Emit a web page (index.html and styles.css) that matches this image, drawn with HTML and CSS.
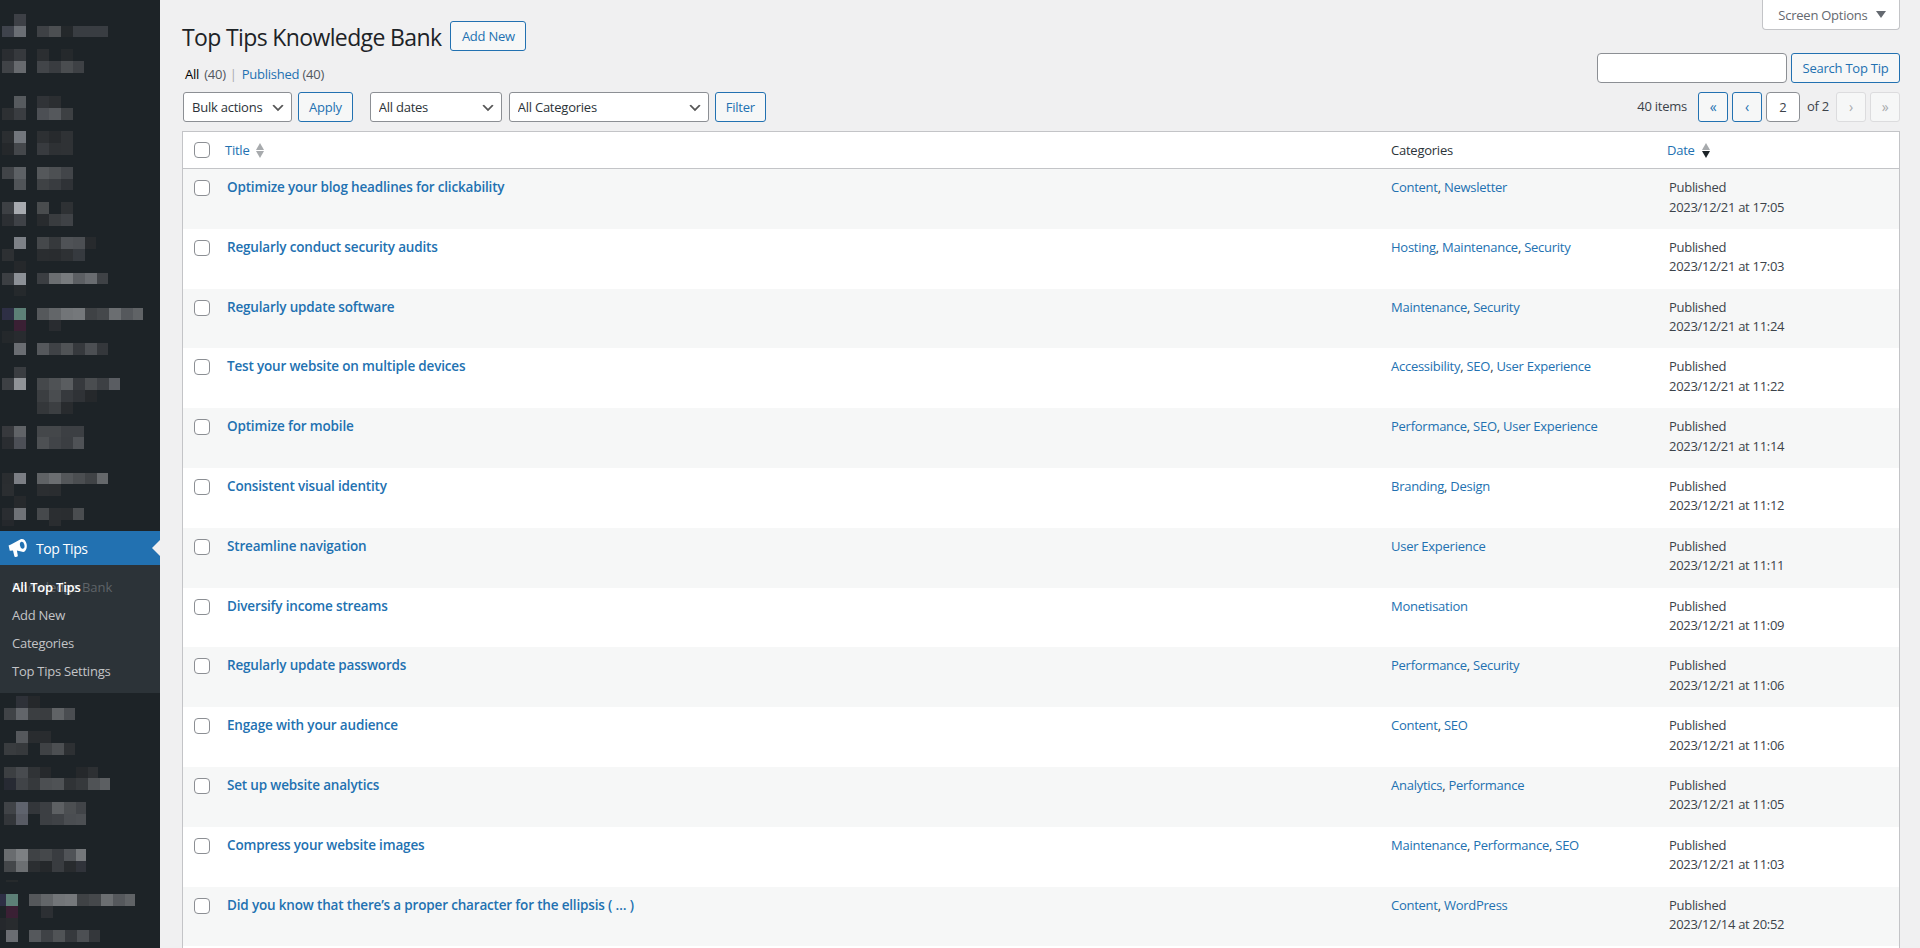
FILE: index.html
```html
<!DOCTYPE html>
<html lang="en">
<head>
<meta charset="utf-8">
<title>Top Tips Knowledge Bank</title>
<link rel="stylesheet" href="styles.css">
</head>
<body>
<div class="shell">
<aside class="sidebar">
<svg class="mosaic" width="160" height="531" viewBox="0 0 160 531" aria-hidden="true">
<rect x="14" y="14" width="12" height="12" fill="#3d4046"/>
<rect x="2" y="26" width="12" height="11" fill="#3f434c"/><rect x="14" y="26" width="12" height="11" fill="#6a6e74"/><rect x="37" y="26" width="12" height="11" fill="#3e4145"/><rect x="49" y="26" width="12" height="11" fill="#4c4f52"/><rect x="61" y="26" width="12" height="11" fill="#24282b"/><rect x="73" y="26" width="35" height="11" fill="#393d42"/>
<rect x="2" y="49" width="12" height="12" fill="#2a2d31"/><rect x="14" y="49" width="12" height="12" fill="#36393d"/><rect x="37" y="49" width="12" height="12" fill="#2b2e31"/><rect x="61" y="49" width="12" height="12" fill="#25292c"/>
<rect x="2" y="61" width="12" height="12" fill="#404347"/><rect x="14" y="61" width="12" height="12" fill="#676a6e"/><rect x="37" y="61" width="12" height="12" fill="#424549"/><rect x="49" y="61" width="12" height="12" fill="#393c40"/><rect x="61" y="61" width="12" height="12" fill="#4a4d50"/><rect x="73" y="61" width="11" height="12" fill="#3e4145"/>
<rect x="14" y="96" width="12" height="12" fill="#565a5e"/><rect x="37" y="96" width="12" height="12" fill="#303337"/><rect x="49" y="96" width="12" height="12" fill="#2b2e31"/>
<rect x="2" y="108" width="12" height="12" fill="#2d3033"/><rect x="14" y="108" width="12" height="12" fill="#3a3d41"/><rect x="37" y="108" width="12" height="12" fill="#4c4f54"/><rect x="49" y="108" width="12" height="12" fill="#55585c"/><rect x="61" y="108" width="12" height="12" fill="#3d4043"/>
<rect x="2" y="131" width="12" height="12" fill="#2b2e31"/><rect x="14" y="131" width="12" height="12" fill="#72767c"/><rect x="37" y="131" width="12" height="12" fill="#2d3033"/><rect x="49" y="131" width="12" height="12" fill="#272a2d"/><rect x="61" y="131" width="12" height="12" fill="#2f3235"/>
<rect x="2" y="143" width="12" height="12" fill="#25282b"/><rect x="14" y="143" width="12" height="12" fill="#44474b"/><rect x="37" y="143" width="12" height="12" fill="#383b3f"/><rect x="49" y="143" width="12" height="12" fill="#2e3134"/><rect x="61" y="143" width="12" height="12" fill="#2f3235"/>
<rect x="2" y="167" width="12" height="12" fill="#414448"/><rect x="14" y="167" width="12" height="12" fill="#5d6165"/><rect x="37" y="167" width="12" height="12" fill="#55585b"/><rect x="49" y="167" width="12" height="12" fill="#4d5053"/><rect x="61" y="167" width="12" height="12" fill="#424549"/>
<rect x="14" y="179" width="12" height="11" fill="#505458"/><rect x="37" y="179" width="12" height="11" fill="#3f4245"/><rect x="49" y="179" width="12" height="11" fill="#393c40"/><rect x="61" y="179" width="12" height="11" fill="#2f3236"/>
<rect x="2" y="202" width="12" height="12" fill="#3d4044"/><rect x="14" y="202" width="12" height="12" fill="#a7aaaf"/><rect x="37" y="202" width="12" height="12" fill="#494c4e"/><rect x="61" y="202" width="12" height="12" fill="#2e3134"/>
<rect x="2" y="214" width="12" height="12" fill="#2c2f33"/><rect x="14" y="214" width="12" height="12" fill="#3f4247"/><rect x="37" y="214" width="12" height="12" fill="#282b2e"/><rect x="49" y="214" width="12" height="12" fill="#393c3f"/><rect x="61" y="214" width="12" height="12" fill="#3f4246"/>
<rect x="14" y="237" width="12" height="12" fill="#7d8187"/><rect x="37" y="237" width="12" height="12" fill="#45484b"/><rect x="49" y="237" width="12" height="12" fill="#36393c"/><rect x="61" y="237" width="12" height="12" fill="#4f5256"/><rect x="73" y="237" width="12" height="12" fill="#4c4f53"/><rect x="85" y="237" width="11" height="12" fill="#272a2d"/>
<rect x="2" y="249" width="12" height="12" fill="#2d3033"/><rect x="37" y="249" width="12" height="12" fill="#2a2d30"/><rect x="49" y="249" width="12" height="12" fill="#292c2f"/><rect x="61" y="249" width="12" height="12" fill="#2e3134"/><rect x="73" y="249" width="12" height="12" fill="#363a3f"/>
<rect x="14" y="261" width="12" height="12" fill="#25282b"/>
<rect x="2" y="273" width="12" height="12" fill="#3c3f43"/><rect x="14" y="273" width="12" height="12" fill="#8c9096"/><rect x="37" y="273" width="12" height="11" fill="#3b3e42"/><rect x="49" y="273" width="12" height="11" fill="#6b6e71"/><rect x="61" y="273" width="12" height="11" fill="#787b7e"/><rect x="73" y="273" width="12" height="11" fill="#5c5f63"/><rect x="85" y="273" width="12" height="11" fill="#696c70"/><rect x="97" y="273" width="11" height="11" fill="#3f4246"/>
<rect x="14" y="285" width="12" height="11" fill="#25292c"/>
<rect x="2" y="308" width="12" height="12" fill="#2e2f45"/><rect x="14" y="308" width="12" height="12" fill="#5d8077"/><rect x="37" y="308" width="12" height="12" fill="#55585b"/><rect x="49" y="308" width="12" height="12" fill="#636669"/><rect x="61" y="308" width="12" height="12" fill="#727578"/><rect x="73" y="308" width="12" height="12" fill="#75787b"/><rect x="85" y="308" width="12" height="12" fill="#3f4245"/><rect x="97" y="308" width="12" height="12" fill="#45484b"/><rect x="109" y="308" width="12" height="12" fill="#6b6e71"/><rect x="121" y="308" width="12" height="12" fill="#55585c"/><rect x="133" y="308" width="10" height="12" fill="#606366"/>
<rect x="14" y="320" width="12" height="11" fill="#3a2034"/><rect x="49" y="320" width="12" height="11" fill="#292c30"/>
<rect x="2" y="331" width="12" height="12" fill="#24282b"/><rect x="14" y="331" width="12" height="12" fill="#282b2f"/>
<rect x="14" y="343" width="12" height="12" fill="#6a6d72"/><rect x="37" y="343" width="12" height="12" fill="#55585c"/><rect x="49" y="343" width="12" height="12" fill="#3f4246"/><rect x="61" y="343" width="12" height="12" fill="#505356"/><rect x="73" y="343" width="12" height="12" fill="#36393d"/><rect x="85" y="343" width="12" height="12" fill="#4c4f53"/><rect x="97" y="343" width="11" height="12" fill="#34373b"/>
<rect x="14" y="367" width="12" height="11" fill="#3a3d41"/>
<rect x="2" y="378" width="12" height="12" fill="#3d4044"/><rect x="14" y="378" width="12" height="12" fill="#909397"/><rect x="37" y="378" width="12" height="12" fill="#45484b"/><rect x="49" y="378" width="12" height="12" fill="#4f5255"/><rect x="61" y="378" width="12" height="12" fill="#5a5d60"/><rect x="73" y="378" width="12" height="12" fill="#36393d"/><rect x="85" y="378" width="12" height="12" fill="#4a4d50"/><rect x="97" y="378" width="12" height="12" fill="#3d4044"/><rect x="109" y="378" width="11" height="12" fill="#5a5d62"/>
<rect x="37" y="390" width="12" height="12" fill="#3b3e41"/><rect x="49" y="390" width="12" height="12" fill="#4a4d50"/><rect x="61" y="390" width="12" height="12" fill="#36393d"/><rect x="73" y="390" width="12" height="12" fill="#2f3236"/><rect x="85" y="390" width="12" height="12" fill="#25282b"/>
<rect x="37" y="402" width="12" height="12" fill="#34373a"/><rect x="49" y="402" width="12" height="12" fill="#3c3f42"/><rect x="61" y="402" width="12" height="12" fill="#282b2e"/>
<rect x="2" y="426" width="12" height="11" fill="#37393d"/><rect x="14" y="426" width="12" height="11" fill="#606367"/><rect x="37" y="426" width="12" height="11" fill="#44474a"/><rect x="49" y="426" width="12" height="11" fill="#44474a"/><rect x="61" y="426" width="12" height="11" fill="#3c3f43"/><rect x="73" y="426" width="11" height="11" fill="#3c3f43"/>
<rect x="2" y="437" width="12" height="12" fill="#2a2d31"/><rect x="14" y="437" width="12" height="12" fill="#4c4f56"/><rect x="37" y="437" width="12" height="12" fill="#4d5053"/><rect x="49" y="437" width="12" height="12" fill="#414448"/><rect x="61" y="437" width="12" height="12" fill="#3b3e42"/><rect x="73" y="437" width="11" height="12" fill="#4f5256"/>
<rect x="2" y="473" width="12" height="11" fill="#2a2d30"/><rect x="14" y="473" width="12" height="11" fill="#7b7e84"/><rect x="37" y="473" width="12" height="11" fill="#5f6265"/><rect x="49" y="473" width="12" height="11" fill="#6b6e71"/><rect x="61" y="473" width="12" height="11" fill="#54575a"/><rect x="73" y="473" width="12" height="11" fill="#4b4e51"/><rect x="85" y="473" width="12" height="11" fill="#404346"/><rect x="97" y="473" width="11" height="11" fill="#65686b"/>
<rect x="2" y="484" width="12" height="12" fill="#2b2e31"/><rect x="37" y="484" width="12" height="12" fill="#2b2e31"/><rect x="49" y="484" width="12" height="12" fill="#2a2d30"/>
<rect x="14" y="496" width="12" height="12" fill="#26292c"/>
<rect x="2" y="508" width="12" height="12" fill="#2a2d31"/><rect x="14" y="508" width="12" height="12" fill="#6f7277"/><rect x="37" y="508" width="12" height="12" fill="#46494c"/><rect x="49" y="508" width="12" height="12" fill="#2b2e31"/><rect x="61" y="508" width="12" height="12" fill="#2a2d30"/><rect x="73" y="508" width="11" height="12" fill="#4a4d50"/>
<rect x="2" y="520" width="12" height="6" fill="#25282c"/><rect x="49" y="520" width="12" height="6" fill="#2a2d30"/>
</svg>
<a class="menu-current" href="#">
<svg class="menu-icon" width="20" height="20" viewBox="0 0 20 20" aria-hidden="true"><path fill="#fff" d="M0.6 7.4 3 6.6 12.6 1.2C15 0.2 17.8 2.2 18.6 6 19.4 10 17.8 13.6 15.2 14L8.9 12.6 9.8 17.6C9.9 18.2 9.6 18.6 9 18.7L7.4 18.9C6.8 19 6.5 18.6 6.3 18L5 12.4 1.8 12.8Z"/><ellipse cx="14.2" cy="7.3" rx="2.2" ry="3.6" fill="#2271b1" transform="rotate(-12 14.2 7.3)"/></svg>
<span class="menu-label">Top Tips</span>
<span class="menu-arrow"></span>
</a>
<nav class="submenu">
<a class="sub-item sub-current" href="#"><span class="ghost">Knowledge Bank</span><span class="sub-top">All Top Tips</span></a>
<a class="sub-item" href="#">Add New</a>
<a class="sub-item" href="#">Categories</a>
<a class="sub-item" href="#">Top Tips Settings</a>
</nav>
<svg class="mosaic" width="160" height="255" viewBox="0 693 160 255" aria-hidden="true">
<rect x="16" y="696" width="12" height="12" fill="#2e3138"/><rect x="28" y="696" width="12" height="12" fill="#25282b"/>
<rect x="4" y="708" width="12" height="12" fill="#404347"/><rect x="16" y="708" width="12" height="12" fill="#62656a"/><rect x="28" y="708" width="12" height="12" fill="#3b3e41"/><rect x="40" y="708" width="12" height="12" fill="#3a3d40"/><rect x="52" y="708" width="12" height="12" fill="#606366"/><rect x="64" y="708" width="11" height="12" fill="#4a4d51"/>
<rect x="16" y="731" width="12" height="12" fill="#55585c"/><rect x="28" y="731" width="12" height="12" fill="#292c2f"/><rect x="40" y="731" width="11" height="12" fill="#292c2f"/>
<rect x="4" y="743" width="12" height="12" fill="#393c3f"/><rect x="16" y="743" width="12" height="12" fill="#36393c"/><rect x="40" y="743" width="12" height="12" fill="#3f4245"/><rect x="52" y="743" width="12" height="12" fill="#4c4f52"/><rect x="64" y="743" width="11" height="12" fill="#2d3033"/>
<rect x="4" y="767" width="12" height="11" fill="#3c3f42"/><rect x="16" y="767" width="12" height="11" fill="#484b4f"/><rect x="28" y="767" width="12" height="11" fill="#303336"/><rect x="40" y="767" width="11" height="11" fill="#26292c"/><rect x="76" y="767" width="12" height="11" fill="#25282b"/><rect x="88" y="767" width="10" height="11" fill="#2d3033"/>
<rect x="4" y="778" width="12" height="12" fill="#272a33"/><rect x="16" y="778" width="12" height="12" fill="#404347"/><rect x="28" y="778" width="12" height="12" fill="#36393c"/><rect x="40" y="778" width="12" height="12" fill="#4c4f52"/><rect x="52" y="778" width="12" height="12" fill="#4f5255"/><rect x="64" y="778" width="12" height="12" fill="#303336"/><rect x="76" y="778" width="12" height="12" fill="#36393c"/><rect x="88" y="778" width="12" height="12" fill="#505356"/><rect x="100" y="778" width="10" height="12" fill="#5c5f62"/>
<rect x="4" y="802" width="12" height="12" fill="#404347"/><rect x="16" y="802" width="12" height="12" fill="#5f636d"/><rect x="28" y="802" width="12" height="12" fill="#33363a"/><rect x="40" y="802" width="12" height="12" fill="#3c3f43"/><rect x="52" y="802" width="12" height="12" fill="#5d6063"/><rect x="64" y="802" width="12" height="12" fill="#4c4f52"/><rect x="76" y="802" width="10" height="12" fill="#414448"/>
<rect x="4" y="814" width="12" height="11" fill="#33363a"/><rect x="16" y="814" width="12" height="11" fill="#585b64"/><rect x="40" y="814" width="12" height="11" fill="#3c3f43"/><rect x="52" y="814" width="12" height="11" fill="#3f4246"/><rect x="64" y="814" width="12" height="11" fill="#4a4d51"/><rect x="76" y="814" width="10" height="11" fill="#4c4f53"/>
<rect x="4" y="849" width="12" height="12" fill="#696c6f"/><rect x="16" y="849" width="12" height="12" fill="#7d8083"/><rect x="28" y="849" width="12" height="12" fill="#3f4245"/><rect x="40" y="849" width="12" height="12" fill="#45484b"/><rect x="52" y="849" width="12" height="12" fill="#393c40"/><rect x="64" y="849" width="12" height="12" fill="#505357"/><rect x="76" y="849" width="10" height="12" fill="#74777a"/>
<rect x="4" y="861" width="12" height="11" fill="#44474a"/><rect x="16" y="861" width="12" height="11" fill="#6c6f72"/><rect x="28" y="861" width="12" height="11" fill="#2b2e31"/><rect x="40" y="861" width="12" height="11" fill="#25282b"/><rect x="52" y="861" width="12" height="11" fill="#393c40"/><rect x="64" y="861" width="12" height="11" fill="#282b2e"/><rect x="76" y="861" width="10" height="11" fill="#30333a"/>
<rect x="6" y="880" width="12" height="2" fill="#262a2c"/>
<rect x="0" y="894" width="6" height="12" fill="#2e2f45"/><rect x="6" y="894" width="12" height="12" fill="#5d8077"/><rect x="29" y="894" width="12" height="12" fill="#55585b"/><rect x="41" y="894" width="12" height="12" fill="#636669"/><rect x="53" y="894" width="12" height="12" fill="#727578"/><rect x="65" y="894" width="12" height="12" fill="#75787b"/><rect x="77" y="894" width="12" height="12" fill="#3f4245"/><rect x="89" y="894" width="12" height="12" fill="#45484b"/><rect x="101" y="894" width="12" height="12" fill="#6b6e71"/><rect x="113" y="894" width="12" height="12" fill="#55585c"/><rect x="125" y="894" width="10" height="12" fill="#606366"/>
<rect x="6" y="906" width="12" height="12" fill="#3a2034"/><rect x="41" y="906" width="12" height="12" fill="#2c2f33"/>
<rect x="0" y="918" width="6" height="12" fill="#25282c"/><rect x="6" y="918" width="12" height="12" fill="#282b2e"/>
<rect x="6" y="930" width="12" height="12" fill="#6a6d72"/><rect x="29" y="930" width="12" height="12" fill="#55585c"/><rect x="41" y="930" width="12" height="12" fill="#3f4246"/><rect x="53" y="930" width="12" height="12" fill="#505356"/><rect x="65" y="930" width="12" height="12" fill="#36393d"/><rect x="77" y="930" width="12" height="12" fill="#4c4f53"/><rect x="89" y="930" width="11" height="12" fill="#34373b"/>
</svg>
</aside>
<main class="content">
<div class="top-row">
<div class="heading"><h1 class="title">Top Tips Knowledge Bank</h1><a class="btn btn-add" href="#">Add New</a></div>
<button class="screen-options" type="button">Screen Options <span class="so-caret"></span></button>
</div>
<div class="sub-row">
<ul class="views"><li><b class="view-current">All</b> <span class="count">(40)</span></li><li class="sep">|</li><li><a href="#">Published</a> <span class="count">(40)</span></li></ul>
<div class="search"><input class="search-input" type="text" aria-label="Search"><button class="btn btn-search" type="button">Search Top Tip</button></div>
</div>
<div class="tablenav">
<div class="actions">
<select class="sel sel-bulk"><option>Bulk actions</option></select><button class="btn" type="button">Apply</button>
</div>
<div class="actions actions-filter">
<select class="sel sel-dates"><option>All dates</option></select><select class="sel sel-cats"><option>All Categories</option></select><button class="btn btn-filter" type="button">Filter</button>
</div>
<div class="pager">
<span class="items">40 items</span>
<a class="pg" href="#">«</a><a class="pg" href="#">‹</a>
<input class="pg-input" type="text" value="2" aria-label="Current page"><span class="of">of 2</span>
<span class="pg pg-off">›</span><span class="pg pg-off">»</span>
</div>
</div>
<table class="list">
<colgroup><col class="c-check"><col class="c-title"><col class="c-cats"><col class="c-date"></colgroup>
<thead><tr>
<th class="check"><input type="checkbox" class="cb" aria-label="Select all"></th>
<th class="th-sort"><a href="#">Title</a><span class="sort"><i class="up"></i><i class="down"></i></span></th>
<th>Categories</th>
<th class="th-sort th-date"><a href="#">Date</a><span class="sort sort-desc"><i class="up"></i><i class="down"></i></span></th>
</tr></thead>
<tbody>
<tr><td class="check"><input type="checkbox" class="cb" aria-label="Select"></td><td class="t"><a href="#">Optimize your blog headlines for clickability</a></td><td><a href="#">Content</a>, <a href="#">Newsletter</a></td><td class="d">Published<br>2023/12/21 at 17:05</td></tr>
<tr><td class="check"><input type="checkbox" class="cb" aria-label="Select"></td><td class="t"><a href="#">Regularly conduct security audits</a></td><td><a href="#">Hosting</a>, <a href="#">Maintenance</a>, <a href="#">Security</a></td><td class="d">Published<br>2023/12/21 at 17:03</td></tr>
<tr><td class="check"><input type="checkbox" class="cb" aria-label="Select"></td><td class="t"><a href="#">Regularly update software</a></td><td><a href="#">Maintenance</a>, <a href="#">Security</a></td><td class="d">Published<br>2023/12/21 at 11:24</td></tr>
<tr><td class="check"><input type="checkbox" class="cb" aria-label="Select"></td><td class="t"><a href="#">Test your website on multiple devices</a></td><td><a href="#">Accessibility</a>, <a href="#">SEO</a>, <a href="#">User Experience</a></td><td class="d">Published<br>2023/12/21 at 11:22</td></tr>
<tr><td class="check"><input type="checkbox" class="cb" aria-label="Select"></td><td class="t"><a href="#">Optimize for mobile</a></td><td><a href="#">Performance</a>, <a href="#">SEO</a>, <a href="#">User Experience</a></td><td class="d">Published<br>2023/12/21 at 11:14</td></tr>
<tr><td class="check"><input type="checkbox" class="cb" aria-label="Select"></td><td class="t"><a href="#">Consistent visual identity</a></td><td><a href="#">Branding</a>, <a href="#">Design</a></td><td class="d">Published<br>2023/12/21 at 11:12</td></tr>
<tr><td class="check"><input type="checkbox" class="cb" aria-label="Select"></td><td class="t"><a href="#">Streamline navigation</a></td><td><a href="#">User Experience</a></td><td class="d">Published<br>2023/12/21 at 11:11</td></tr>
<tr><td class="check"><input type="checkbox" class="cb" aria-label="Select"></td><td class="t"><a href="#">Diversify income streams</a></td><td><a href="#">Monetisation</a></td><td class="d">Published<br>2023/12/21 at 11:09</td></tr>
<tr><td class="check"><input type="checkbox" class="cb" aria-label="Select"></td><td class="t"><a href="#">Regularly update passwords</a></td><td><a href="#">Performance</a>, <a href="#">Security</a></td><td class="d">Published<br>2023/12/21 at 11:06</td></tr>
<tr><td class="check"><input type="checkbox" class="cb" aria-label="Select"></td><td class="t"><a href="#">Engage with your audience</a></td><td><a href="#">Content</a>, <a href="#">SEO</a></td><td class="d">Published<br>2023/12/21 at 11:06</td></tr>
<tr><td class="check"><input type="checkbox" class="cb" aria-label="Select"></td><td class="t"><a href="#">Set up website analytics</a></td><td><a href="#">Analytics</a>, <a href="#">Performance</a></td><td class="d">Published<br>2023/12/21 at 11:05</td></tr>
<tr><td class="check"><input type="checkbox" class="cb" aria-label="Select"></td><td class="t"><a href="#">Compress your website images</a></td><td><a href="#">Maintenance</a>, <a href="#">Performance</a>, <a href="#">SEO</a></td><td class="d">Published<br>2023/12/21 at 11:03</td></tr>
<tr><td class="check"><input type="checkbox" class="cb" aria-label="Select"></td><td class="t"><a href="#">Did you know that there’s a proper character for the ellipsis ( … )</a></td><td><a href="#">Content</a>, <a href="#">WordPress</a></td><td class="d">Published<br>2023/12/14 at 20:52</td></tr>
<tr><td class="check"></td><td class="t"></td><td></td><td class="d"></td></tr>
</tbody>
</table>
</main>
</div>
</body>
</html>
```
FILE: styles.css
```css
* { box-sizing: border-box; }
html, body { margin: 0; height: 948px; overflow: hidden; }
body {
  background: #f0f0f1;
  color: #3c434a;
  font: 13px/19.5px "Open Sans", "Noto Sans", sans-serif;
  letter-spacing: -0.24px;
}
a { color: #2271b1; text-decoration: none; }
.shell { display: flex; height: 948px; }

.sidebar { flex: 0 0 160px; width: 160px; background: #1d2327; display: flex; flex-direction: column; }
.mosaic { display: block; flex: none; }
.menu-current { height: 34px; background: #2271b1; color: #fff; display: flex; align-items: center; font-size: 14px; position: relative; padding-left: 8px; letter-spacing: -0.4px; }
.menu-icon { flex: none; }
.menu-label { margin: 2px 0 0 8px; }
.menu-arrow { position: absolute; right: 0; top: 9px; border: 8px solid transparent; border-right-color: #f0f0f1; border-left-width: 0; }
.submenu { height: 128px; background: #2c3338; padding: 8px 0 0; display: flex; flex-direction: column; }
.sub-item { display: block; height: 28px; line-height: 28px; padding-left: 12px; color: #c3c4c7; position: relative; white-space: nowrap; }
.sub-current { color: #fff; font-weight: 600; }
.ghost { position: absolute; left: 12px; top: 0; color: #5f6468; font-weight: 400; letter-spacing: -0.02px; }
.sub-top { position: relative; }

.content { flex: 1; min-width: 0; padding: 0 20px 0 22px; }
.top-row { display: flex; justify-content: space-between; align-items: flex-start; height: 53px; }
.heading { display: flex; align-items: center; padding-top: 20px; gap: 9px; }
.title { margin: 2px 0 0; font-size: 23px; line-height: 30px; font-weight: 400; color: #1d2327; letter-spacing: -0.63px; align-self: flex-start; }
.btn {
  display: inline-flex; align-items: center; justify-content: center; height: 30px; padding: 1px 10px 0;
  border: 1px solid #2271b1; border-radius: 3px; background: #f6f7f7; color: #2271b1;
  font: inherit; letter-spacing: inherit; white-space: nowrap;
}
.btn-add { width: 76px; padding: 1px 0 0; }
.btn-search { width: 109px; padding: 1px 0 0; }
.btn-filter { margin-left: -1px; }
.screen-options {
  height: 30px; width: 138px; border: 1px solid #c3c4c7; border-top: 0; border-radius: 0 0 4px 4px; background: #fff; color: #646970;
  font: inherit; letter-spacing: inherit; padding: 2px 0 0 2px;
}
.so-caret { display: inline-block; margin-left: 5px; border: 5px solid transparent; border-top: 7px solid #646970; border-bottom: 0; vertical-align: 2px; }

.sub-row { display: flex; justify-content: space-between; align-items: flex-start; height: 39px; }
.views { list-style: none; margin: 0; padding: 12px 0 0 3px; display: flex; gap: 5px; }
.view-current { color: #000; font-weight: 400; margin-right: 2px; }
.count { color: #50575e; }
.sep { color: #a7aaad; margin-left: -1px; }
.search { display: flex; gap: 4px; }
.search-input { width: 190px; height: 30px; border: 1px solid #8c8f94; border-radius: 4px; background: #fff; padding: 0 8px; }

.tablenav { display: flex; align-items: center; height: 30px; margin-bottom: 9px; padding-left: 1px; }
.actions { display: flex; gap: 6px; }
.actions-filter { margin-left: 17px; gap: 7px; }
.sel {
  appearance: none; -webkit-appearance: none; height: 30px; border: 1px solid #8c8f94; border-radius: 3px; color: #2c3338;
  padding: 1px 24px 0 8px; font: inherit; letter-spacing: inherit;
  background: #fff url("data:image/svg+xml;charset=utf8,%3Csvg xmlns='http://www.w3.org/2000/svg' width='20' height='20'%3E%3Cpath d='M5 6l5 5 5-5 2 1-7 7-7-7z' fill='%23555'/%3E%3C/svg%3E") no-repeat right 5px top 55% / 16px 16px;
}
.sel-bulk { width: 109px; }
.sel-dates { width: 132px; }
.sel-cats { width: 200px; }
.pager { margin-left: auto; display: flex; align-items: center; gap: 4px; }
.items { margin-right: 7px; }
.pg { width: 30px; height: 30px; display: flex; align-items: center; justify-content: center; border: 1px solid #2271b1; border-radius: 3px; background: #f6f7f7; color: #2271b1; font-size: 14px; }
.pg-off { border-color: #dcdcde; color: #a7aaad; }
.pg-input { width: 34px; height: 30px; border: 1px solid #8c8f94; border-radius: 4px; background: #fff; text-align: center; font: inherit; color: #3c434a; padding: 0; }
.of { width: 28px; padding-left: 3px; white-space: nowrap; }

.list { width: 100%; table-layout: fixed; border-collapse: separate; border-spacing: 0; border: 1px solid #c3c4c7; border-bottom: 0; background: #fff; }
.c-check { width: 32px; }
.c-cats { width: 277px; }
.c-date { width: 241px; }
.list th { height: 37px; padding: 1px 10px 0; font-weight: 400; text-align: left; color: #2c3338; border-bottom: 1px solid #c3c4c7; vertical-align: middle; }
.list th a { vertical-align: middle; }
.list th.th-date { padding-left: 9px; }
.list td { height: 59.8px; padding: 9px 10px 0; vertical-align: top; letter-spacing: -0.26px; }
.list tbody tr:nth-child(odd) { background: #f6f7f7; }
.list td.check { padding: 11px 0 0 11px; }
.list th.check { padding: 0 0 0 11px; }
.list td.d { padding-left: 11px; letter-spacing: -0.29px; }
.list td.t { padding-left: 12px; }
.cb { appearance: none; -webkit-appearance: none; display: block; width: 16px; height: 16px; margin: 0; border: 1px solid #8c8f94; border-radius: 4px; background: #fff; }
.t a { font-weight: 600; font-size: 13.5px; letter-spacing: -0.17px; }
.th-sort .sort { display: inline-flex; flex-direction: column; gap: 1px; margin-left: 7px; vertical-align: middle; }
.sort i { display: block; border-left: 4px solid transparent; border-right: 4px solid transparent; }
.sort .up { border-bottom: 7px solid #a7aaad; }
.sort .down { border-top: 7px solid #a7aaad; }
.sort-desc .down { border-top-color: #1d2327; }
```
